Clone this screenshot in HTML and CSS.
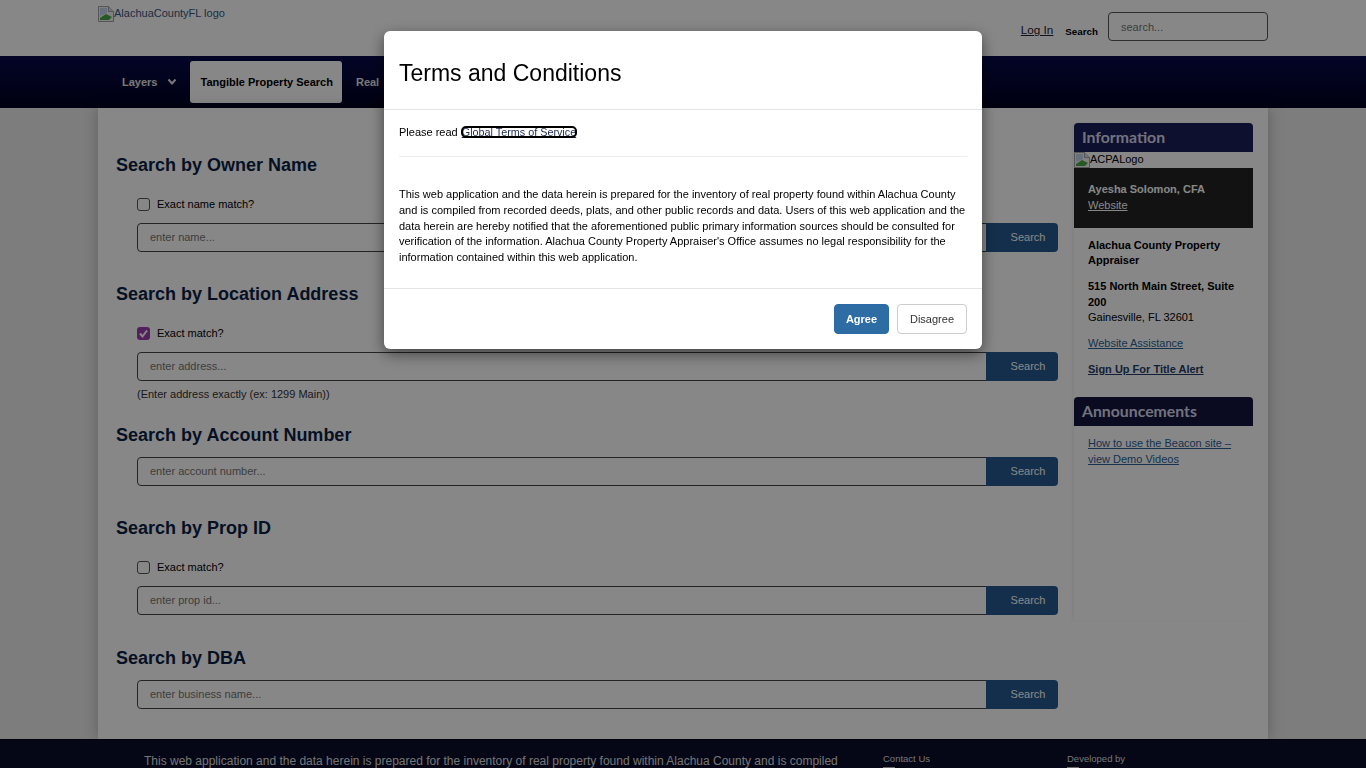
FILE: index.html
```html
<!DOCTYPE html>
<html lang="en">
<head>
  <meta charset="UTF-8">
  <meta name="viewport" content="width=device-width, initial-scale=1.0">
  <title>Alachua County Property Search</title>
  <link rel="stylesheet" href="styles.css">
</head>
<body>
  <header class="top-bar">
    <a class="logo" href="#">
      <svg class="broken-img" viewBox="0 0 16 16"><path d="M.5.5h10l5 5v10H.5z" fill="#f4f4f4" stroke="#a0a0a0"/><path d="M10.5.5v5h5" fill="#ddd" stroke="#a0a0a0"/><path d="M2 2h7v5l-7 3z" fill="#c3d5ee"/><path d="M2 14v-2l6-4 4 2 2 1-3 3z" fill="#4aa84a"/></svg>AlachuaCountyFL logo
    </a>
    <div class="top-tools">
      <a class="login" href="#">Log In</a>
      <span class="top-search-label">Search</span>
      <input class="top-search" type="text" placeholder="search...">
    </div>
  </header>

  <nav class="main-nav">
    <a class="nav-item" href="#">Layers
      <svg class="chevron" viewBox="0 0 10 8"><path d="M1.5 1.5 5 5.5l3.5-4" fill="none" stroke="currentColor" stroke-width="2"/></svg>
    </a>
    <a class="nav-item active" href="#">Tangible Property Search</a>
    <a class="nav-item" href="#">Real</a>
  </nav>

  <div class="page">
    <main class="search-col">
      <section class="search-block">
        <h2>Search by Owner Name</h2>
        <label class="check"><span class="box"></span>Exact name match?</label>
        <div class="search-row">
          <input type="text" placeholder="enter name...">
          <button>Search</button>
        </div>
      </section>

      <section class="search-block">
        <h2>Search by Location Address</h2>
        <label class="check"><span class="box checked"><svg viewBox="0 0 13 13"><path d="M3 6.5 5.5 9.5 10 3.5" fill="none" stroke="#fff" stroke-width="2"/></svg></span>Exact match?</label>
        <div class="search-row">
          <input type="text" placeholder="enter address...">
          <button>Search</button>
        </div>
        <p class="hint">(Enter address exactly (ex: 1299 Main))</p>
      </section>

      <section class="search-block no-check after-hint">
        <h2>Search by Account Number</h2>
        <div class="search-row">
          <input type="text" placeholder="enter account number...">
          <button>Search</button>
        </div>
      </section>

      <section class="search-block tall">
        <h2>Search by Prop ID</h2>
        <label class="check"><span class="box"></span>Exact match?</label>
        <div class="search-row">
          <input type="text" placeholder="enter prop id...">
          <button>Search</button>
        </div>
      </section>

      <section class="search-block no-check">
        <h2>Search by DBA</h2>
        <div class="search-row">
          <input type="text" placeholder="enter business name...">
          <button>Search</button>
        </div>
      </section>
    </main>

    <aside class="side">
      <h3 class="side-title">Information</h3>
      <div class="side-logo">
        <svg class="broken-img" viewBox="0 0 16 16"><path d="M.5.5h10l5 5v10H.5z" fill="#f4f4f4" stroke="#a0a0a0"/><path d="M10.5.5v5h5" fill="#ddd" stroke="#a0a0a0"/><path d="M2 2h7v5l-7 3z" fill="#c3d5ee"/><path d="M2 14v-2l6-4 4 2 2 1-3 3z" fill="#4aa84a"/></svg>ACPALogo
      </div>
      <div class="appraiser">
        <strong>Ayesha Solomon, CFA</strong>
        <a href="#">Website</a>
      </div>
      <div class="side-body">
        <p class="bold">Alachua County Property Appraiser</p>
        <p><b>515 North Main Street, Suite 200</b><br>Gainesville, FL 32601</p>
        <p><a href="#">Website Assistance</a></p>
        <p><a class="strong-link" href="#">Sign Up For Title Alert</a></p>
      </div>
      <h3 class="side-title dark">Announcements</h3>
      <div class="side-body news">
        <a href="#">How to use the Beacon site – view Demo Videos</a>
      </div>
    </aside>
  </div>

  <footer class="site-footer">
    <p class="foot-text">This web application and the data herein is prepared for the inventory of real property found within Alachua County and is compiled</p>
    <div class="foot-col contact">Contact Us<span class="foot-icon"></span></div>
    <div class="foot-col">Developed by<span class="foot-icon"></span></div>
  </footer>

  <div class="backdrop"></div>
  <div class="modal">
    <div class="modal-head"><h1>Terms and Conditions</h1></div>
    <div class="modal-body">
      <p class="read">Please read <a class="focused" href="#">Global Terms of Service</a></p>
      <hr>
      <p class="terms">This web application and the data herein is prepared for the inventory of real property found within Alachua County and is compiled from recorded deeds, plats, and other public records and data. Users of this web application and the data herein are hereby notified that the aforementioned public primary information sources should be consulted for verification of the information. Alachua County Property Appraiser's Office assumes no legal responsibility for the information contained within this web application.</p>
    </div>
    <div class="modal-foot">
      <button class="btn-agree">Agree</button>
      <button class="btn-disagree">Disagree</button>
    </div>
  </div>
</body>
</html>
```

FILE: styles.css
```css
html, body {
  height: 768px;
  overflow: hidden;
}

body {
  margin: 0;
  font-family: "Liberation Sans", Arial, sans-serif;
  font-size: 11px;
  color: #000;
  background-color: #ececec;
  display: flex;
  flex-direction: column;
}

.broken-img {
  width: 16px;
  height: 16px;
  flex: none;
}

/* top bar */
.top-bar {
  height: 56px;
  flex: none;
  padding: 0 98px;
  display: flex;
  justify-content: space-between;
  background-color: #fff;
}

.logo {
  display: flex;
  align-items: flex-start;
  margin-top: 6px;
  font-size: 11px;
  line-height: 15px;
  color: #34587f;
  text-decoration: none;
}

.top-tools {
  display: flex;
  align-items: flex-start;
}

.login {
  margin-top: 23px;
  font-size: 11.7px;
  color: #223;
}

.top-search-label {
  margin: 26px 0 0 12px;
  font-size: 9.8px;
  font-weight: bold;
}

.top-search {
  box-sizing: border-box;
  width: 160px;
  height: 29px;
  margin: 12px 0 0 10px;
  padding: 0 12px;
  border: 1px solid #555;
  border-radius: 4px;
  font-family: inherit;
  font-size: 11px;
  background: transparent;
}

/* nav */
.main-nav {
  height: 52px;
  flex: none;
  padding: 5px 0 5px 112px;
  box-sizing: border-box;
  display: flex;
  gap: 4px;
  background: linear-gradient(#070a4a, #010220);
}

.nav-item {
  display: flex;
  align-items: center;
  gap: 9px;
  padding: 0 10px;
  border-radius: 3px;
  font-size: 11px;
  font-weight: bold;
  color: #e4e4e4;
  text-decoration: none;
}

.nav-item.active {
  padding-right: 9px;
  background-color: #fff;
  color: #000;
}

.chevron {
  width: 10px;
  height: 8px;
  margin: 0 -1px 0 1px;
}

/* page */
.page {
  width: 1170px;
  flex: 1;
  margin: 0 auto;
  min-height: 0;
  display: flex;
  background-color: #fff;
  box-shadow: 0 0 14px rgba(0, 0, 0, 0.25);
}

.search-col {
  width: 976px;
  padding: 43px 0 0 18px;
  box-sizing: border-box;
  flex: none;
}

.search-block {
  height: 129px;
}

.search-block.tall {
  height: 130px;
}

.search-block.no-check {
  height: 93px;
}

.search-block.after-hint {
  margin-top: 12px;
}

.search-block h2 {
  margin: 0;
  height: 28px;
  font-size: 18px;
  line-height: 28px;
  font-weight: bold;
  color: #0c1f47;
}

.check {
  display: flex;
  align-items: center;
  gap: 7px;
  height: 14px;
  margin: 18px 0 12px 21px;
  line-height: 14px;
}

.no-check .search-row {
  margin-top: 8px;
}

.box {
  width: 11px;
  height: 11px;
  border: 1px solid #555;
  border-radius: 3px;
  background-color: #fff;
}

.box.checked {
  width: 13px;
  height: 13px;
  border: none;
  background-color: #9c3fb0;
}

.box svg {
  display: block;
}

.search-row {
  display: flex;
  margin-left: 21px;
  width: 921px;
  height: 29px;
}

.search-row input {
  flex: 1;
  box-sizing: border-box;
  padding: 0 12px 2px;
  border: 1px solid #444;
  border-radius: 4px 0 0 4px;
  font-family: inherit;
  font-size: 11px;
  background-color: #fff;
}

.search-row button {
  width: 72px;
  margin-left: -1px;
  padding: 0 0 2px 12px;
  border: none;
  border-radius: 0 4px 4px 0;
  font-family: inherit;
  font-size: 11px;
  color: #fff;
  background-color: #245a8f;
}

.hint {
  margin: 7px 0 0 21px;
  font-size: 11px;
  line-height: 13px;
  color: #333;
}

/* sidebar */
.side {
  width: 179px;
  height: 497px;
  margin-top: 15px;
  flex: none;
  box-shadow: -2px 0 3px rgba(0, 0, 0, 0.05);
}

.side-title {
  margin: 0;
  height: 29px;
  padding-left: 8px;
  border-radius: 4px 4px 0 0;
  font-family: Lato, sans-serif;
  font-size: 15.8px;
  line-height: 27px;
  font-weight: bold;
  color: #d8d8ec;
  background-color: #1a1f58;
}

.side-title.dark {
  background-color: #14163f;
}

.side-logo {
  display: flex;
  height: 16px;
  line-height: 15px;
}

.appraiser {
  height: 60px;
  padding: 13px 14px 0;
  box-sizing: border-box;
  color: #fff;
  background-color: #222;
  line-height: 16px;
}

.appraiser strong {
  display: block;
}

.appraiser a {
  color: #fff;
}

.side-body {
  padding: 9.5px 14px 9px;
  line-height: 15.5px;
}

.side-body p {
  margin: 0 0 10.5px;
}

.side-body .bold {
  font-weight: bold;
}

.side-body a {
  color: #2a5f96;
}

.side-body a.strong-link {
  font-weight: bold;
  color: #1f3f68;
}

.side-title + .side-body.news {
  padding-top: 9px;
  line-height: 16px;
}

/* footer */
.site-footer {
  height: 29px;
  flex: none;
  overflow: hidden;
  display: flex;
  box-sizing: border-box;
  padding: 14px 0 0 144px;
  color: #ddd;
  background-color: #0a0f2c;
  border-top: 1px solid #04061a;
}

.foot-text {
  width: 700px;
  margin: 0;
  font-size: 12px;
  line-height: 15px;
}

.foot-col {
  margin-top: -1px;
  font-size: 9.5px;
  line-height: 11px;
}

.foot-col.contact {
  width: 184px;
  margin-left: 39px;
}

.foot-icon {
  display: block;
  width: 12px;
  height: 10px;
  margin-top: 3px;
  background-color: #ccc;
}

/* modal */
.backdrop {
  position: fixed;
  inset: 0;
  background-color: rgba(0, 0, 0, 0.47);
}

.modal {
  position: fixed;
  top: 31px;
  left: 384px;
  width: 598px;
  height: 318px;
  display: flex;
  flex-direction: column;
  border-radius: 6px;
  background-color: #fff;
  box-shadow: 0 5px 15px rgba(0, 0, 0, 0.5);
}

.modal-head {
  height: 79px;
  flex: none;
  box-sizing: border-box;
  padding: 7px 15px 0;
  border-bottom: 1px solid #e5e5e5;
  display: flex;
  align-items: center;
}

.modal-head h1 {
  margin: 0;
  font-size: 23px;
  font-weight: normal;
}

.modal-body {
  height: 178px;
  flex: none;
  box-sizing: border-box;
  padding: 14px 15px 0;
}

.read {
  margin: 0;
  line-height: 16px;
}

.focused {
  display: inline-block;
  height: 10px;
  margin-left: 1px;
  font-size: 10.8px;
  line-height: 10px;
  color: #1c2a52;
  border-radius: 4px;
  outline: 2px solid #000;
  outline-offset: -1px;
}

.modal-body hr {
  margin: 16px 0 30px;
  border: none;
  border-top: 1px solid #eee;
}

.terms {
  margin: 0;
  font-size: 11px;
  line-height: 15.75px;
}

.modal-foot {
  flex: 1;
  box-sizing: border-box;
  padding: 15px;
  border-top: 1px solid #e5e5e5;
  display: flex;
  justify-content: flex-end;
  gap: 8px;
}

.modal-foot button {
  height: 30px;
  border-radius: 4px;
  font-family: inherit;
  font-size: 11px;
}

.btn-agree {
  width: 55px;
  border: 1px solid #2a6aa8;
  font-weight: bold;
  color: #fff;
  background-color: #2e6da4;
}

.btn-disagree {
  width: 70px;
  border: 1px solid #ccc;
  color: #333;
  background-color: #fff;
}
```
